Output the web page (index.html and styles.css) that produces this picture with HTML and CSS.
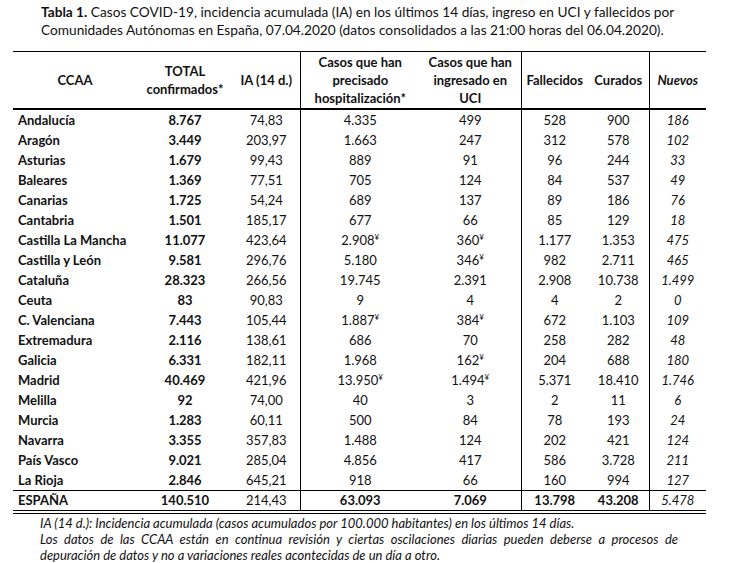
FILE: index.html
```html
<!DOCTYPE html>
<html lang="es">
<head>
<meta charset="utf-8">
<link rel="stylesheet" href="styles.css">
</head>
<body>
<div class="page">
  <p class="title"><b>Tabla 1.</b> Casos COVID-19, incidencia acumulada (IA) en los últimos 14 días, ingreso en UCI y fallecidos por<br>Comunidades Autónomas en España, 07.04.2020 (datos consolidados a las 21:00 horas del 06.04.2020).</p>
  <table class="data">
    <colgroup>
      <col class="c1"><col class="c2"><col class="c3"><col class="c4"><col class="c5"><col class="c6"><col class="c7"><col class="c8">
    </colgroup>
    <thead>
      <tr>
        <th>CCAA</th>
        <th>TOTAL<br>confirmados*</th>
        <th class="vr">IA (14 d.)</th>
        <th>Casos que han<br>precisado<br>hospitalización*</th>
        <th class="vr">Casos que han<br>ingresado en<br>UCI</th>
        <th>Fallecidos</th>
        <th class="vr">Curados</th>
        <th class="it">Nuevos</th>
      </tr>
    </thead>
    <tbody>
      <tr><td class="name">Andalucía</td><td class="b">8.767</td><td class="vr">74,83</td><td>4.335</td><td class="vr">499</td><td>528</td><td class="vr">900</td><td class="it">186</td></tr>
      <tr><td class="name">Aragón</td><td class="b">3.449</td><td class="vr">203,97</td><td>1.663</td><td class="vr">247</td><td>312</td><td class="vr">578</td><td class="it">102</td></tr>
      <tr><td class="name">Asturias</td><td class="b">1.679</td><td class="vr">99,43</td><td>889</td><td class="vr">91</td><td>96</td><td class="vr">244</td><td class="it">33</td></tr>
      <tr><td class="name">Baleares</td><td class="b">1.369</td><td class="vr">77,51</td><td>705</td><td class="vr">124</td><td>84</td><td class="vr">537</td><td class="it">49</td></tr>
      <tr><td class="name">Canarias</td><td class="b">1.725</td><td class="vr">54,24</td><td>689</td><td class="vr">137</td><td>89</td><td class="vr">186</td><td class="it">76</td></tr>
      <tr><td class="name">Cantabria</td><td class="b">1.501</td><td class="vr">185,17</td><td>677</td><td class="vr">66</td><td>85</td><td class="vr">129</td><td class="it">18</td></tr>
      <tr><td class="name">Castilla La Mancha</td><td class="b">11.077</td><td class="vr">423,64</td><td>2.908<sup>¥</sup></td><td class="vr">360<sup>¥</sup></td><td>1.177</td><td class="vr">1.353</td><td class="it">475</td></tr>
      <tr><td class="name">Castilla y León</td><td class="b">9.581</td><td class="vr">296,76</td><td>5.180</td><td class="vr">346<sup>¥</sup></td><td>982</td><td class="vr">2.711</td><td class="it">465</td></tr>
      <tr><td class="name">Cataluña</td><td class="b">28.323</td><td class="vr">266,56</td><td>19.745</td><td class="vr">2.391</td><td>2.908</td><td class="vr">10.738</td><td class="it">1.499</td></tr>
      <tr><td class="name">Ceuta</td><td class="b">83</td><td class="vr">90,83</td><td>9</td><td class="vr">4</td><td>4</td><td class="vr">2</td><td class="it">0</td></tr>
      <tr><td class="name">C. Valenciana</td><td class="b">7.443</td><td class="vr">105,44</td><td>1.887<sup>¥</sup></td><td class="vr">384<sup>¥</sup></td><td>672</td><td class="vr">1.103</td><td class="it">109</td></tr>
      <tr><td class="name">Extremadura</td><td class="b">2.116</td><td class="vr">138,61</td><td>686</td><td class="vr">70</td><td>258</td><td class="vr">282</td><td class="it">48</td></tr>
      <tr><td class="name">Galicia</td><td class="b">6.331</td><td class="vr">182,11</td><td>1.968</td><td class="vr">162<sup>¥</sup></td><td>204</td><td class="vr">688</td><td class="it">180</td></tr>
      <tr><td class="name">Madrid</td><td class="b">40.469</td><td class="vr">421,96</td><td>13.950<sup>¥</sup></td><td class="vr">1.494<sup>¥</sup></td><td>5.371</td><td class="vr">18.410</td><td class="it">1.746</td></tr>
      <tr><td class="name">Melilla</td><td class="b">92</td><td class="vr">74,00</td><td>40</td><td class="vr">3</td><td>2</td><td class="vr">11</td><td class="it">6</td></tr>
      <tr><td class="name">Murcia</td><td class="b">1.283</td><td class="vr">60,11</td><td>500</td><td class="vr">84</td><td>78</td><td class="vr">193</td><td class="it">24</td></tr>
      <tr><td class="name">Navarra</td><td class="b">3.355</td><td class="vr">357,83</td><td>1.488</td><td class="vr">124</td><td>202</td><td class="vr">421</td><td class="it">124</td></tr>
      <tr><td class="name">País Vasco</td><td class="b">9.021</td><td class="vr">285,04</td><td>4.856</td><td class="vr">417</td><td>586</td><td class="vr">3.728</td><td class="it">211</td></tr>
      <tr><td class="name">La Rioja</td><td class="b">2.846</td><td class="vr">645,21</td><td>918</td><td class="vr">66</td><td>160</td><td class="vr">994</td><td class="it">127</td></tr>
    </tbody>
    <tfoot>
      <tr><td class="name">ESPAÑA</td><td class="b">140.510</td><td class="vr">214,43</td><td class="b">63.093</td><td class="vr b">7.069</td><td class="b">13.798</td><td class="vr b">43.208</td><td class="it">5.478</td></tr>
    </tfoot>
  </table>
  <div class="notes">
    <p class="l1">IA (14 d.): Incidencia acumulada (casos acumulados por 100.000 habitantes) en los últimos 14 días.</p>
    <p class="l2">Los datos de las CCAA están en continua revisión y ciertas oscilaciones diarias pueden deberse a procesos de</p>
    <p class="l3">depuración de datos y no a variaciones reales acontecidas de un día a otro.</p>
  </div>
</div>
</body>
</html>
```

FILE: styles.css
```css
html, body {
  margin: 0;
  padding: 0;
  background: #fff;
}
body {
  font-family: Lato, "Open Sans", sans-serif;
  color: #111;
}
.page {
  padding: 1px 0 0 13px;
}
.title {
  margin: 0 0 0 28px;
  font-size: 13.7px;
  line-height: 18px;
  padding-top: 2px;
  height: 48px;
}
.data {
  border-collapse: collapse;
  table-layout: fixed;
  width: 693px;
  font-size: 13px;
}
.c1 { width: 124px; }
.c2 { width: 96px; }
.c3 { width: 67px; }
.c4 { width: 120px; }
.c5 { width: 101px; }
.c6 { width: 67px; }
.c7 { width: 61px; }
.c8 { width: 57px; }
.data thead tr {
  border-top: 1px solid #000;
  border-bottom: 2px solid #000;
}
.data th {
  height: 56px;
  padding: 0;
  font-weight: 700;
  line-height: 18px;
  text-align: center;
  vertical-align: middle;
}
.data th.it {
  font-style: italic;
}
.data td {
  height: 20px;
  padding: 0;
  text-align: center;
  line-height: 20px;
  white-space: nowrap;
}
.data td.name {
  text-align: left;
  padding-left: 5px;
  font-weight: 700;
}
.data td.b {
  font-weight: 700;
}
.data .it {
  font-style: italic;
}
.data .vr {
  border-right: 1px solid #000;
}
.data sup {
  font-size: 8px;
  line-height: 0;
  vertical-align: 5px;
}
.data tfoot tr {
  border-top: 1px solid #000;
  border-bottom: 4px double #000;
}
.data tfoot td {
  height: 19px;
  line-height: 19px;
}
.notes {
  margin-left: 27px;
  width: 638px;
  font-size: 13px;
  font-style: italic;
  line-height: 16px;
  padding-top: 1px;
}
.notes p {
  margin: 0;
}
.notes .l2 {
  text-align: justify;
  text-align-last: justify;
}
```
